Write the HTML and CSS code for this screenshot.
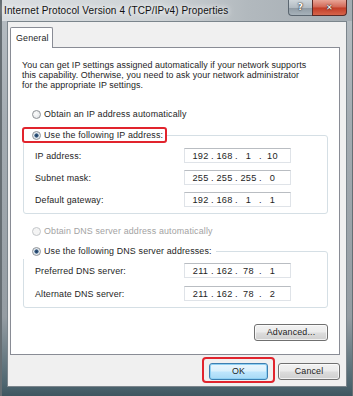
FILE: index.html
```html
<!DOCTYPE html>
<html lang="en">
<head>
    <meta charset="UTF-8">
    <title>Internet Protocol Version 4 (TCP/IPv4) Properties</title>
<link rel="stylesheet" href="styles.css">
</head>
<body>
    <div class="window">
        <div class="window__titlebar">
            <div class="window__title">Internet Protocol Version 4 (TCP/IPv4) Properties</div>
            <div class="window__controls">
                <span class="window__control window__control--help">?</span>
                <span class="window__control window__control--close">&#x2715;</span>
            </div>
        </div>
        <div class="window__client">
            <div class="tabs">
                <div class="tabs__tab">General</div>
            </div>
            <div class="panel">
                <p class="panel__intro">
                    You can get IP settings assigned automatically if your network supports<br>
                    this capability. Otherwise, you need to ask your network administrator<br>
                    for the appropriate IP settings.
                </p>

                <div class="option option--ip-auto">
                    <span class="radio"></span>
                    <span class="option__label">Obtain an IP address automatically</span>
                </div>

                <fieldset class="group group--ip">
                    <legend class="group__legend">
                        <span class="group__legend__box group__legend__box--marked">
                            <span class="radio radio--checked"></span>
                            <span class="option__label">Use the following IP address:</span>
                        </span>
                    </legend>
                    <div class="group__row">
                        <div class="group__row__label">IP address:</div>
                        <div class="ipbox">
                            <span class="ipbox__part">192</span><span class="ipbox__dot">.</span><span class="ipbox__part">168</span><span class="ipbox__dot">.</span><span class="ipbox__part">1</span><span class="ipbox__dot">.</span><span class="ipbox__part">10</span>
                        </div>
                    </div>
                    <div class="group__row">
                        <div class="group__row__label">Subnet mask:</div>
                        <div class="ipbox">
                            <span class="ipbox__part">255</span><span class="ipbox__dot">.</span><span class="ipbox__part">255</span><span class="ipbox__dot">.</span><span class="ipbox__part">255</span><span class="ipbox__dot">.</span><span class="ipbox__part">0</span>
                        </div>
                    </div>
                    <div class="group__row">
                        <div class="group__row__label">Default gateway:</div>
                        <div class="ipbox">
                            <span class="ipbox__part">192</span><span class="ipbox__dot">.</span><span class="ipbox__part">168</span><span class="ipbox__dot">.</span><span class="ipbox__part">1</span><span class="ipbox__dot">.</span><span class="ipbox__part">1</span>
                        </div>
                    </div>
                </fieldset>

                <div class="option option--dns-auto option--disabled">
                    <span class="radio radio--disabled"></span>
                    <span class="option__label">Obtain DNS server address automatically</span>
                </div>

                <fieldset class="group group--dns">
                    <legend class="group__legend">
                        <span class="group__legend__box">
                            <span class="radio radio--checked"></span>
                            <span class="option__label">Use the following DNS server addresses:</span>
                        </span>
                    </legend>
                    <div class="group__row">
                        <div class="group__row__label">Preferred DNS server:</div>
                        <div class="ipbox">
                            <span class="ipbox__part">211</span><span class="ipbox__dot">.</span><span class="ipbox__part">162</span><span class="ipbox__dot">.</span><span class="ipbox__part">78</span><span class="ipbox__dot">.</span><span class="ipbox__part">1</span>
                        </div>
                    </div>
                    <div class="group__row">
                        <div class="group__row__label">Alternate DNS server:</div>
                        <div class="ipbox">
                            <span class="ipbox__part">211</span><span class="ipbox__dot">.</span><span class="ipbox__part">162</span><span class="ipbox__dot">.</span><span class="ipbox__part">78</span><span class="ipbox__dot">.</span><span class="ipbox__part">2</span>
                        </div>
                    </div>
                </fieldset>

                <div class="panel__footer">
                    <button class="button button--advanced">Advanced...</button>
                </div>
            </div>
            <div class="actions">
                <span class="actions__mark">
                    <button class="button button--default">OK</button>
                </span>
                <button class="button button--cancel">Cancel</button>
            </div>
        </div>
    </div>
</body>
</html>
```

FILE: styles.css
```css
* {
    margin: 0;
    padding: 0;
    box-sizing: border-box;
}
body {
    width: 353px;
    height: 396px;
    overflow: hidden;
    font: 8.9px/10px "Liberation Sans", Arial, sans-serif;
    letter-spacing: 0.15px;
    color: #1e1e1e;
    background: #6f777c;
}
.window {
    width: 353px;
    height: 396px;
    display: flex;
    flex-direction: column;
    background: linear-gradient(to bottom, #b8bfc4 0, #a4acb2 30%, #959da3 80%, #4e6670 97%, #3f5660 100%);
    border-left: 2px solid #666e73;
    border-right: 1px solid #666e73;
}
.window__titlebar {
    height: 21px;
    display: flex;
    justify-content: space-between;
    align-items: flex-start;
    background: linear-gradient(to right, #dadee1 0, #cdd2d5 45%, #b2b9be 70%, #a4acb2 100%);
}
.window__title {
    padding: 5px 0 0 2px;
    font-size: 10px;
    line-height: 12px;
    letter-spacing: 0.12px;
    color: #111;
    text-shadow: 0 0 5px #fff, 0 0 8px #fff;
}
.window__controls {
    display: flex;
    margin-right: 5px;
}
.window__control {
    height: 16px;
    display: flex;
    align-items: center;
    justify-content: center;
    color: #fff;
    font: bold 9px/1 "DejaVu Sans", sans-serif;
    text-shadow: 0 0 2px #333, 0 0 1px #000;
    border: 1px solid #5b6670;
    border-top: none;
}
.window__control--help {
    width: 24px;
    border-radius: 0 0 0 4px;
    border-right: none;
    background: linear-gradient(to bottom, #cfd6db 0, #b3bcc3 50%, #8f9aa3 51%, #a7b2ba 100%);
}
.window__control--close {
    width: 35px;
    font-size: 8px;
    border-color: #5a2a26;
    border-radius: 0 0 4px 0;
    background: linear-gradient(to bottom, #e8a597 0, #d26654 48%, #c23c26 52%, #d6644a 100%);
}
.window__client {
    flex: 1;
    margin: 0 5px 9px 5px;
    padding: 5px 6px 0 2px;
    background: #f0f0f0;
    border: 1px solid #7b858c;
    display: flex;
    flex-direction: column;
}
.tabs {
    height: 20px;
    display: flex;
}
.tabs__tab {
    position: relative;
    z-index: 1;
    width: 43px;
    height: 21px;
    margin-bottom: -1px;
    padding: 5px 0 0 5px;
    background: #fff;
    border: 1px solid #898c95;
    border-bottom: none;
    border-radius: 2px 2px 0 0;
}
.panel {
    height: 308px;
    padding: 12px 11px 0 11px;
    background: #fff;
    border: 1px solid #898c95;
    display: flex;
    flex-direction: column;
}
.panel__intro {
    line-height: 10px;
    letter-spacing: 0.07px;
    white-space: nowrap;
}
.option {
    height: 14px;
    display: flex;
    align-items: center;
    padding-left: 10px;
}
.option--ip-auto {
    margin-top: 17px;
}
.option--dns-auto {
    margin-top: 10px;
}
.option--disabled {
    color: #a3a3a3;
}
.option__label {
    margin-left: 3px;
}
.radio {
    width: 9px;
    height: 9px;
    border-radius: 50%;
    border: 1px solid #8e9297;
    background: radial-gradient(circle at 40% 40%, #fdfdfd 0, #dcdfe2 100%);
}
.radio--checked {
    background: radial-gradient(circle, #1d3a5c 0, #3a5f86 1.8px, #dfe6ec 2.4px, #f4f6f8 100%);
}
.radio--disabled {
    border-color: #c4c7ca;
    background: #f4f4f4;
}
.group {
    margin-left: 1px;
    border: 1px solid #d5dfe5;
    border-radius: 3px;
    padding: 5px 0 6px 0;
    display: flex;
    flex-direction: column;
    gap: 7px;
}
.group--ip {
    margin-top: 6px;
}
.group--dns {
    margin-top: 5px;
    padding-top: 4px;
    gap: 8px;
}
.group__legend {
    margin-left: -2px;
}
.group__legend__box {
    height: 16px;
    display: flex;
    align-items: center;
    padding: 0 2px 0 8px;
    border: 2px solid transparent;
    border-radius: 3px;
}
.group__legend__box--marked {
    border-color: #e1242d;
}
.group__row {
    height: 15px;
    display: flex;
    align-items: center;
    padding-left: 11px;
}
.group__row__label {
    width: 149px;
}
.ipbox {
    width: 107px;
    height: 15px;
    display: flex;
    align-items: center;
    padding-left: 5px;
    background: #fff;
    border: 1px solid #dfe3e8;
    border-top-color: #b9bdc2;
    font-size: 9.2px;
    letter-spacing: 0.3px;
}
.ipbox__part {
    width: 21px;
    text-align: center;
}
.ipbox__dot {
    width: 3px;
    text-align: center;
}
.panel__footer {
    margin-top: 16px;
    display: flex;
    justify-content: flex-end;
}
.button {
    height: 17px;
    font: 8.9px/1 "Liberation Sans", Arial, sans-serif;
    letter-spacing: 0.15px;
    color: #1e1e1e;
    border: 1px solid #707070;
    border-radius: 3px;
    background: linear-gradient(to bottom, #f2f2f2 0, #ebebeb 48%, #dddddd 52%, #cfcfcf 100%);
    box-shadow: inset 0 0 0 1px rgba(255, 255, 255, 0.7);
}
.button--advanced {
    width: 74px;
}
.button--default {
    width: 59px;
    border-color: #3c7fb1;
    background: linear-gradient(to bottom, #eaf6fd 0, #d9f0fc 48%, #bee6fd 52%, #a7d9f5 100%);
    box-shadow: inset 0 0 0 1px #8fd0f3;
}
.button--cancel {
    width: 62px;
    margin-top: 6px;
}
.actions {
    margin-top: 2px;
    display: flex;
    justify-content: flex-end;
    align-items: flex-start;
    gap: 3px;
}
.actions__mark {
    display: flex;
    padding: 4px 5px 1px 5px;
    border: 2px solid #e1242d;
    border-radius: 4px;
}
```
